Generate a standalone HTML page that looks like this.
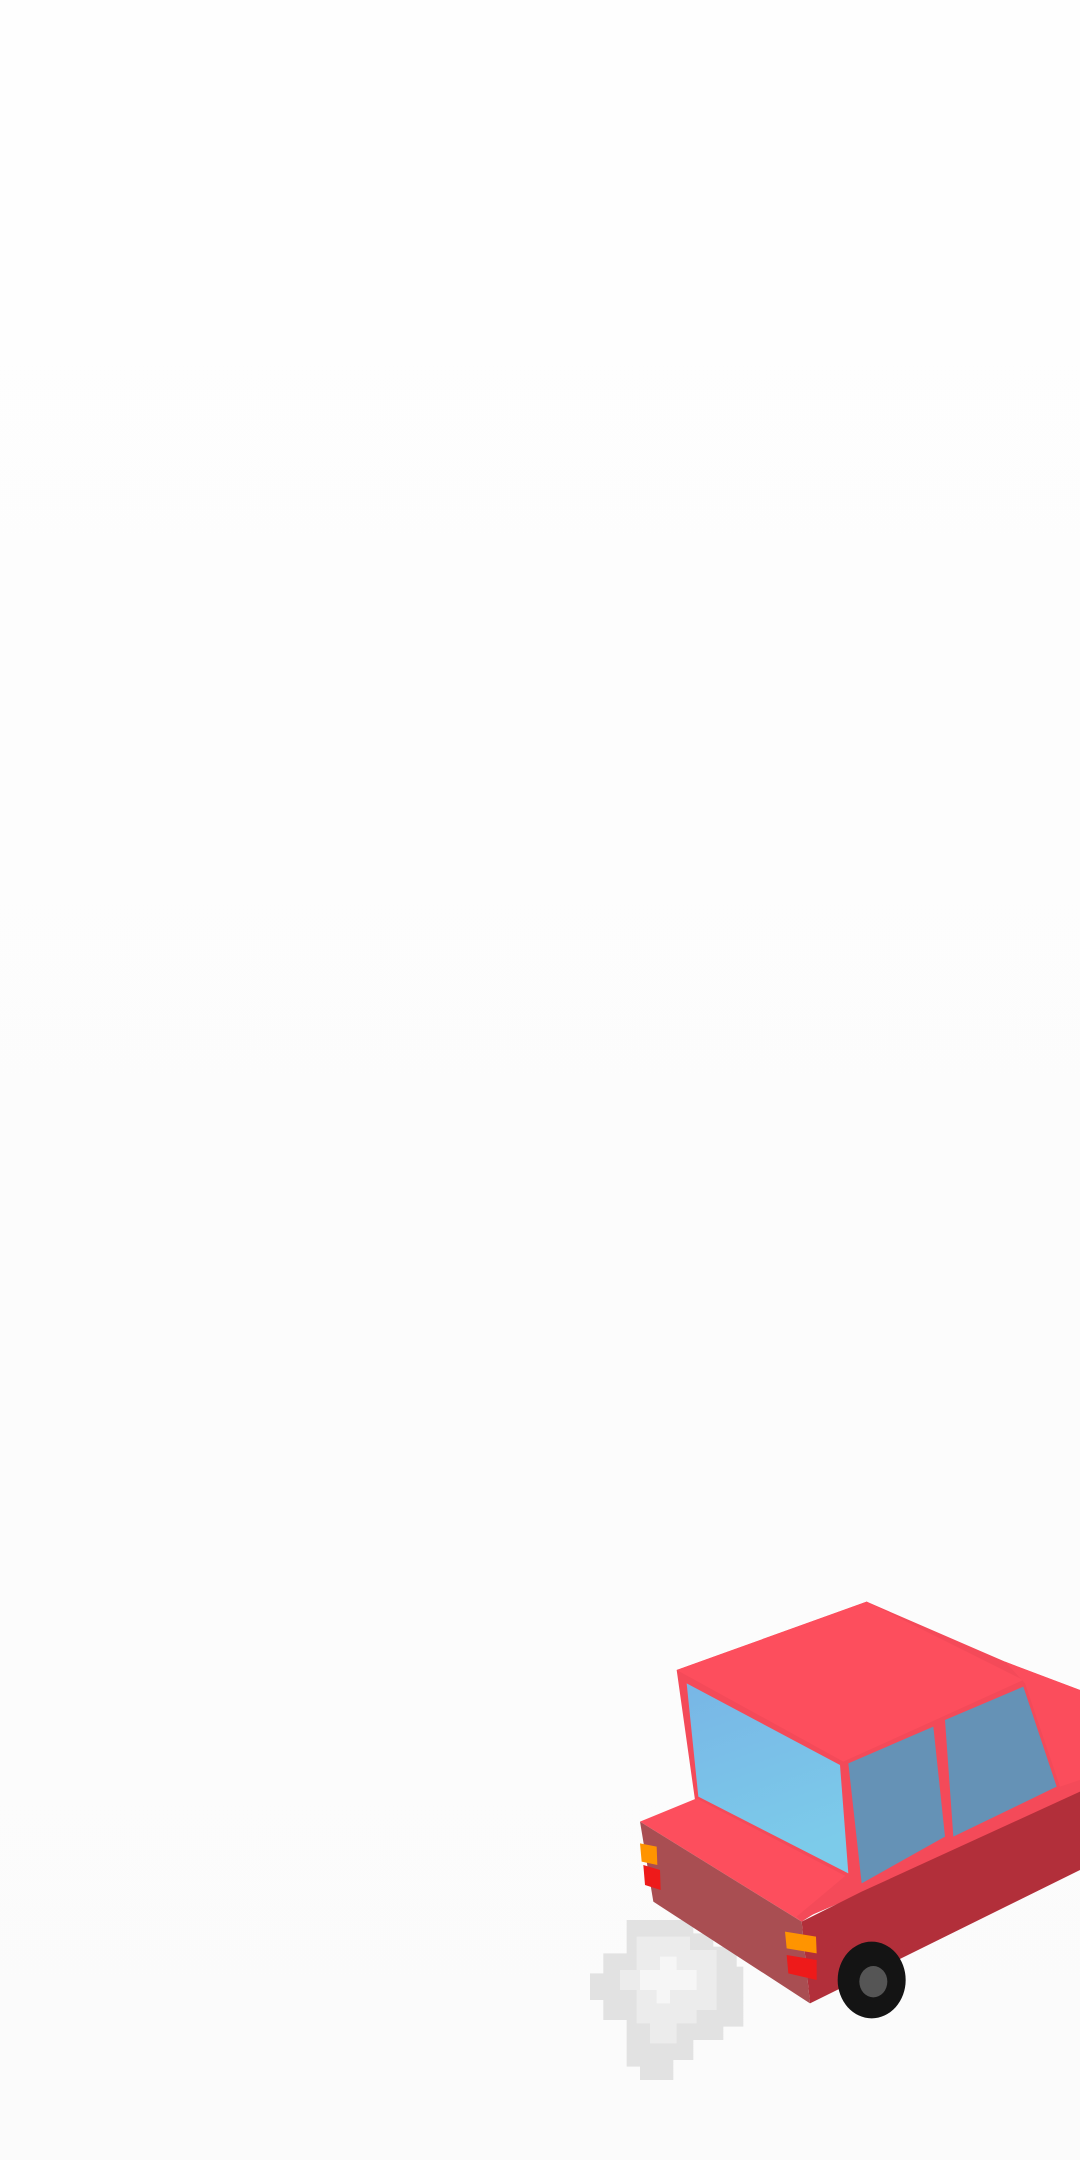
<!DOCTYPE html>
<html><head><meta charset="utf-8"><style>
html,body{margin:0;padding:0;width:1080px;height:2160px;overflow:hidden;background:linear-gradient(#fefefe,#fbfbfb);}
svg{position:absolute;left:0;top:0}
</style></head><body>
<svg width="1080" height="2160" viewBox="0 0 1080 2160">
<g transform="translate(580,1580) scale(0.3333333)">
  <path fill="#e2e2e2" d="M140 1020h200v40h60v40h70v60h20v180h-60v40h-90v60h-60v60H180v-40h-40v-140H70v-60H30v-80h40v-60h70z"/>
  <path fill="#ececec" d="M170 1070h160v40h80v180h-60v40h-60v60h-80v-60h-40v-100h-50v-60h50z"/>
  <path fill="#f6f6f6" d="M240 1130h50v40h60v60h-80v40h-40v-40h-50v-60h60z"/>
  <polygon fill="#f44a59" points="290,270 860,65 1275,245 1500,330 1500,660 660,1020 345,660"/>
  <polygon fill="#fd4e5d" points="290,270 860,65 1330,300 790,545"/>
  <polygon fill="#fb4d5c" points="1275,245 1500,330 1500,600 1440,620 1335,310"/>
  <defs>
    <linearGradient id="rw" x1="0" y1="0" x2="0.3" y2="1"><stop offset="0" stop-color="#78b6e6"/><stop offset="1" stop-color="#7ccbea"/></linearGradient>
  </defs>
  <polygon fill="url(#rw)" points="320,310 780,555 805,880 355,650"/>
  <polygon fill="#6592b6" points="805,550 1060,440 1095,770 845,910"/>
  <polygon fill="#6592b6" points="1095,420 1330,320 1430,620 1120,770"/>
  <polygon fill="#fd4e5d" points="180,725 350,655 820,900 665,1025"/>
  <polygon fill="#f44a59" points="805,880 845,910 665,1025 650,1010"/>
  <polygon fill="#b22f3a" points="665,1025 845,935 1500,635 1500,870 690,1270"/>
  <polygon fill="#a94e52" points="180,725 665,1025 690,1270 220,965"/>
  <polygon fill="#ff9400" points="180,790 230,800 232,855 185,845"/>
  <polygon fill="#ee1a1a" points="190,855 240,870 242,930 195,915"/>
  <polygon fill="#ff9400" points="615,1055 708,1070 710,1120 620,1105"/>
  <polygon fill="#ee1a1a" points="620,1125 710,1140 710,1200 625,1180"/>
  <ellipse cx="875" cy="1200" rx="102" ry="115" fill="#141414"/>
  <ellipse cx="880" cy="1205" rx="42" ry="47" fill="#555"/>
</g>
</svg>
</body></html>
